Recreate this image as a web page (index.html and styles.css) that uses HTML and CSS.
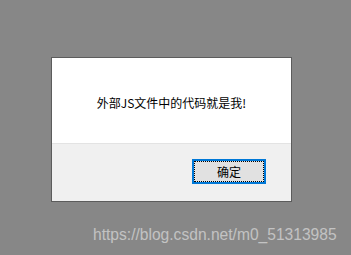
FILE: index.html
```html
<!DOCTYPE html>
<html lang="zh-CN">
<head>
    <meta charset="UTF-8">
    <title>alert</title>
    <link rel="stylesheet" href="styles.css">
</head>
<body>

<div class="dialog">
    <div class="message">外部JS文件中的代码就是我!</div>
    <div class="footer">
        <button class="ok">确定</button>
    </div>
</div>

<div class="watermark">https://blog.csdn.net/m0_51313985</div>

</body>
</html>
```

FILE: styles.css
```css
body {
    margin: 0;
    height: 255px;
    background-color: #878787;
    font-family: "Noto Sans CJK SC", "Noto Sans", sans-serif;
    position: relative;
    overflow: hidden;
}

.dialog {
    margin: 57px 0 0 51px;
    width: 239px;
    border: 1px solid #5c5c5c;
    background-color: #fff;
}

.message {
    height: 85px;
    display: flex;
    align-items: center;
    justify-content: center;
    font-size: 12px;
    color: #000;
    padding-top: 4px;
    box-sizing: border-box;
}

.footer {
    height: 58px;
    box-sizing: border-box;
    background-color: #f0f0f0;
    border-top: 1px solid #e3e3e3;
    display: flex;
    justify-content: flex-end;
    align-items: flex-start;
    padding: 15px 25px 0 0;
}

.ok {
    width: 74px;
    height: 25px;
    margin: 0;
    padding: 0;
    font-family: inherit;
    font-size: 12px;
    color: #000;
    background-color: #e1e1e1;
    border: 1px solid #0078d7;
    outline: 1px dotted #000;
    outline-offset: -3px;
    box-shadow: inset 0 0 0 1px #0078d7;
}

.watermark {
    position: absolute;
    left: 93px;
    top: 226px;
    font-family: "Liberation Sans", Arial, sans-serif;
    font-size: 15.6px;
    color: rgba(255, 255, 255, 0.5);
}
```
